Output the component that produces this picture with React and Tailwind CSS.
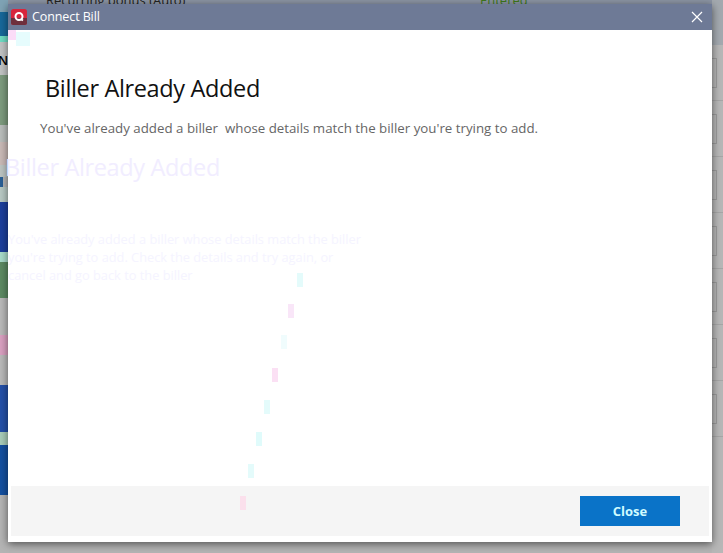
const font = { fontFamily: '"Open Sans", "Noto Sans", sans-serif' };

// faint leftovers of the previous screen, drawn over the white body
const smears = [
  [297, 273, 'bg-[#e4fbfb]'], [288, 304, 'bg-[#f9e6f8]'], [281, 335, 'bg-[#f0fcfd]'],
  [272, 368, 'bg-[#fbe0f4]'], [264, 400, 'bg-[#e4fbfb]'], [256, 432, 'bg-[#e0fbfb]'],
  [248, 464, 'bg-[#e4fbfb]'], [240, 496, 'bg-[#fbe0ec]'],
];

function LeftStrip() {
  return (
    <div className="flex flex-col w-2 h-full overflow-hidden shrink-0">
      <div className="h-[12px] bg-[#7fa3b5]" />
      <div className="h-[24px] bg-[#17689a]" />
      <div className="h-[6px] bg-[#6fdcc4]" />
      <div className="h-[33px] bg-[#c2c4c4] text-black text-[13px] leading-[36px] font-semibold whitespace-nowrap -indent-[2px]">NC</div>
      <div className="h-[50px] bg-[#7d9b7e]" />
      <div className="h-[17px] bg-[#b9bdbb]" />
      <div className="h-[23px] bg-[#c9b9b6]" />
      <div className="h-[12px] bg-[#bcc4c2]" />
      <div className="h-[10px] w-[3px] bg-[#2a5f96]" />
      <div className="h-[15px] bg-[#b8c9c4]" />
      <div className="h-[50px] bg-[#1d3f9c]" />
      <div className="h-[10px] bg-[#a9dccb]" />
      <div className="h-[36px] bg-[#5c8a62]" />
      <div className="h-[37px] bg-[#b9b9b9]" />
      <div className="h-[20px] bg-[#d9a0c0]" />
      <div className="h-[30px] bg-[#b9b9b9]" />
      <div className="h-[47px] bg-[#2450a8]" />
      <div className="h-[13px] bg-[#a9cdb9]" />
      <div className="h-[50px] bg-[#1450a0]" />
      <div className="flex-1 bg-[#b4b4b4]" />
    </div>
  );
}

function RightStrip() {
  return (
    <div className="flex flex-col w-[11px] h-full shrink-0 bg-[#b7b7b7]">
      <div className="h-[45px] bg-[#a3a9af]" />
      {[0, 1, 2, 3, 4, 5, 6].map(i => (
        <div key={i} className="h-[56px] border-b border-[#a6a6a6] flex items-center">
          <div className="w-[5px] h-[30px] border border-l-0 border-[#9c9c9c]" />
        </div>
      ))}
      <div className="flex-1" />
    </div>
  );
}

export default function App() {
  return (
    <div className="flex w-[723px] h-[553px] overflow-hidden bg-[#b7b7b7]" style={font}>
      <LeftStrip />

      <div className="flex flex-col w-[704px] h-full">
        <div className="relative h-1 bg-[#8c95a4] overflow-hidden shrink-0">
          <span className="absolute left-[38px] top-[-9px] text-[13px] leading-[18px] text-[#222] whitespace-nowrap">Recurring bonus (Auto)</span>
          <span className="absolute left-[472px] top-[-9px] text-[13px] leading-[18px] text-[#3f7a1c] whitespace-nowrap">Entered</span>
        </div>

        <div className="relative flex flex-col h-[538px] bg-white shadow-[0_2px_8px_rgba(0,0,0,0.55)]">
          <div className="flex items-center h-[26px] bg-[#6e7a96] pl-[3px] pr-[9px] shrink-0">
            <svg width="16" height="16" viewBox="0 0 16 16">
              <rect width="16" height="16" rx="2.5" fill="#d8263c" />
              <path d="M0 9h16v4.5a2.5 2.5 0 0 1-2.5 2.5h-11A2.5 2.5 0 0 1 0 13.500z" fill="#6e2f3c" />
              <circle cx="8" cy="7.500" r="3.500" fill="none" stroke="#fff" strokeWidth="2" />
              <path d="M9.500 10l2.500 1.500" stroke="#fff" strokeWidth="2" />
            </svg>
            <span className="ml-[5px] text-[12.5px] text-white flex-1 tracking-[-0.1px]">Connect Bill</span>
            <svg width="12" height="12" viewBox="0 0 12 12" stroke="#fff" strokeWidth="1.200">
              <path d="M1 1l10 10M11 1L1 11" />
            </svg>
          </div>

          <div className="flex-1 flex flex-col">
            <h1 className="pl-[37px] pt-[41px] text-[23.500px] leading-[34px] text-[#111] tracking-[-0.35px]">Biller Already Added</h1>
            <p className="pl-[32px] pt-[14px] text-[13.300px] leading-[18px] text-[#666] whitespace-pre">You've already added a biller  whose details match the biller you're trying to add.</p>
          </div>

          <div className="flex items-center justify-end h-[50px] mx-[3px] mb-[6px] pr-[29px] bg-[#f5f5f5] shrink-0">
            <button className="w-[100px] h-[30px] pt-[1px] bg-[#0a73c8] text-[13px] font-bold text-[#d0fbff]">Close</button>
          </div>

          {/* ghost text from the screen behind */}
          <div className="absolute left-[-3px] top-[146px] text-[23.500px] leading-[34px] tracking-[-0.35px] text-[#f1edff] whitespace-nowrap">Biller Already Added</div>
          <div className="absolute left-0 top-[226px] w-[360px] text-[12.800px] leading-[18px] text-[#f5f4ff] h-[54px] overflow-hidden">
            You've already added a biller whose details match the biller you're trying to add. Check the details and try again, or cancel and go back to the biller
          </div>
          {smears.map(([x, y, c]) => (
            <div key={y} className={`absolute w-[6px] h-[14px] ${c}`} style={{ left: x - 8, top: y - 4 }} />
          ))}
          <div className="absolute left-0 top-[26px] w-[8px] h-[10px] bg-[#fbdcf8]" />
          <div className="absolute left-[8px] top-[28px] w-[14px] h-[14px] bg-[#e6fcfd]" />
        </div>

        <div className="flex-1 bg-[#b4b4b4]" />
      </div>

      <RightStrip />
    </div>
  );
}
